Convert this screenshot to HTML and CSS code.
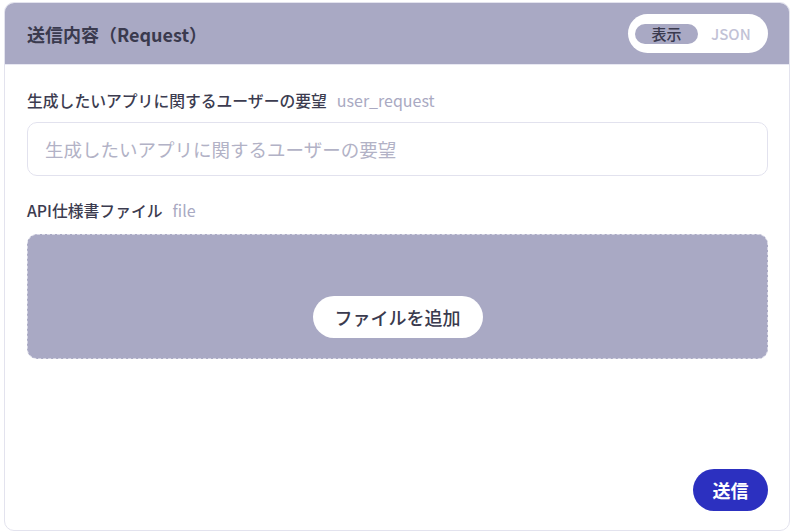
FILE: index.html
```html
<!DOCTYPE html>
<html lang="ja">
<head>
<meta charset="utf-8">
<link rel="stylesheet" href="styles.css">
</head>
<body>
<div class="card">
  <div class="card-header">
    <h1 class="title">送信内容（Request）</h1>
    <div class="toggle">
      <span class="toggle-item active">表示</span>
      <span class="toggle-item">JSON</span>
    </div>
  </div>
  <div class="card-body">
    <div class="field">
      <label class="label">生成したいアプリに関するユーザーの要望<span class="key">user_request</span></label>
      <input class="input" type="text" placeholder="生成したいアプリに関するユーザーの要望">
    </div>
    <div class="field">
      <label class="label">API仕様書ファイル<span class="key">file</span></label>
      <div class="dropzone">
        <button class="add-btn">ファイルを追加</button>
      </div>
    </div>
    <div class="actions">
      <button class="send-btn">送信</button>
    </div>
  </div>
</div>
</body>
</html>
```
FILE: styles.css
```css
* { box-sizing: border-box; }
html, body { margin: 0; background: #ffffff; }
body {
  padding: 2px 2px 0 4px;
  font-family: "Noto Sans CJK JP", "Noto Sans", sans-serif;
  color: #3c3c50;
}
.card {
  width: 786px;
  height: 529px;
  border: 1px solid #e3e3ee;
  border-radius: 10px;
  overflow: hidden;
  background: #fff;
  display: flex;
  flex-direction: column;
}
.card-header {
  height: 62px;
  background: #a9a9c4;
  border-bottom: 1px solid #e8e8f2;
  display: flex;
  align-items: center;
  justify-content: space-between;
  padding: 0 21px 0 22px;
}
.title {
  margin: 0;
  font-size: 18px;
  font-weight: 700;
  color: #3a3a4e;
  line-height: 1;
}
.toggle {
  height: 39px;
  width: 140px;
  background: #fff;
  border-radius: 20px;
  display: flex;
  align-items: center;
  padding: 0 7px;
}
.toggle-item {
  font-size: 15px;
  font-weight: 500;
  line-height: 20px;
  padding: 0 0 0 13px;
  border-radius: 10px;
  color: #c2c2d6;
}
.toggle-item.active {
  background: #a9a9c4;
  color: #3a3a4e;
  width: 63px;
  padding: 0;
  text-align: center;
}
.card-body {
  flex: 1;
  display: flex;
  flex-direction: column;
  padding: 25px 21px 19px 22px;
}
.field { display: flex; flex-direction: column; }
.field + .field { margin-top: 24px; }
.label {
  font-size: 15.8px;
  font-weight: 500;
  line-height: 20px;
  color: #3c3c50;
  margin-bottom: 11px;
}
.key {
  font-weight: 400;
  color: #a9a9c2;
  margin-left: 10px;
  font-size: 16px;
}
.input {
  height: 54px;
  border: 1px solid #e2e2ee;
  border-radius: 10px;
  padding: 0 17px;
  font-family: inherit;
  font-size: 18.5px;
  color: #3c3c50;
  outline: none;
}
.input::placeholder { color: #b2b2c6; }
.dropzone {
  margin-top: 2px;
  height: 125px;
  background: #a9a9c4;
  border: 1.5px dashed #d6d6e4;
  border-radius: 10px;
  display: flex;
  align-items: flex-end;
  justify-content: center;
  padding-bottom: 20px;
}
.add-btn {
  height: 42px;
  padding: 0 22px;
  border: none;
  border-radius: 21px;
  background: #fff;
  font-family: inherit;
  font-size: 18px;
  font-weight: 500;
  color: #3a3a4e;
}
.actions {
  margin-top: auto;
  display: flex;
  justify-content: flex-end;
}
.send-btn {
  height: 42px;
  width: 75px;
  border: none;
  border-radius: 21px;
  background: #2c30c0;
  color: #fff;
  font-family: inherit;
  font-size: 18px;
  font-weight: 700;
}
```
